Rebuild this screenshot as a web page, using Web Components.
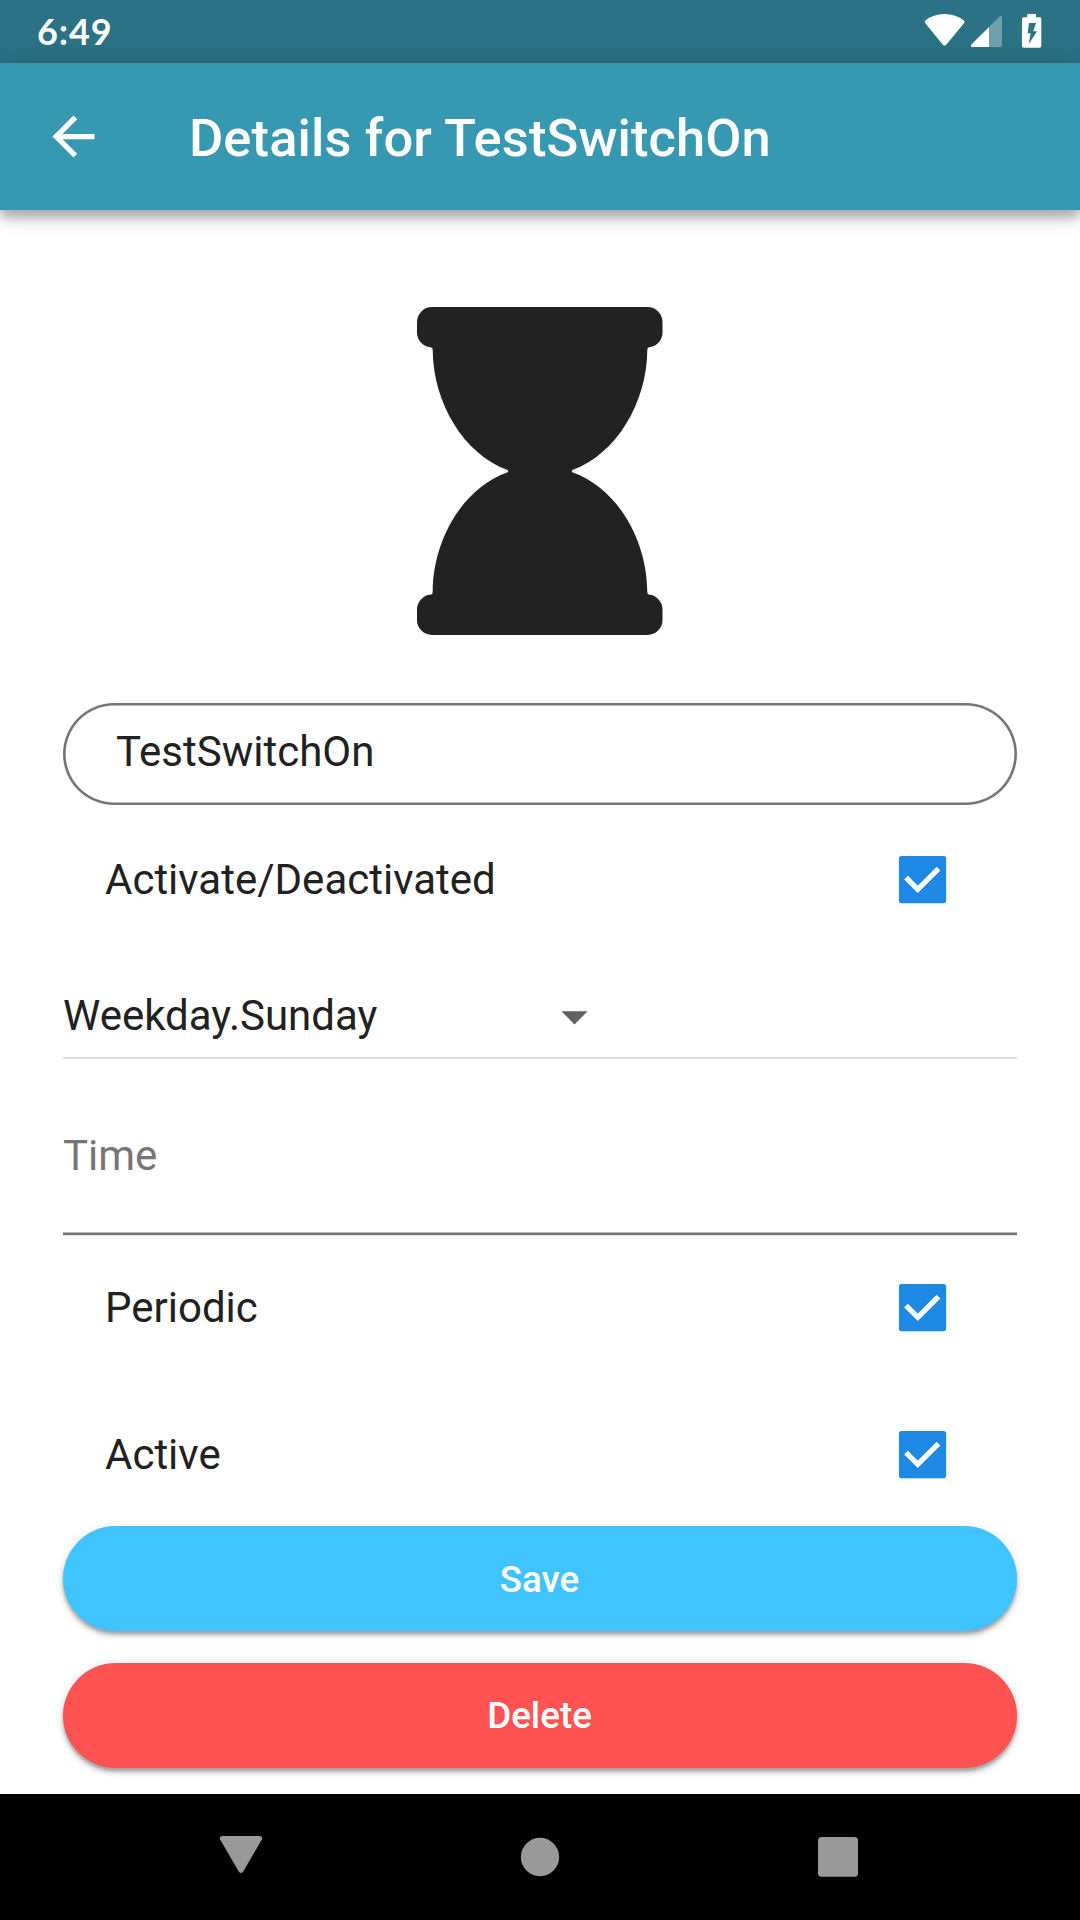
<!DOCTYPE html>
<html lang="en">
<head>
<meta charset="utf-8">
<title>Details for TestSwitchOn</title>
<style>
html,body{margin:0;padding:0;background:#fff}
body{width:1080px;height:1920px;overflow:hidden;font-family:Roboto,"Liberation Sans",sans-serif;color:#212121}
</style>
</head>
<body>
<details-screen></details-screen>
<script>
const define = (name, markup) => customElements.define(name, class extends HTMLElement {
  constructor() {
    super();
    const t = document.createElement('template');
    t.innerHTML = markup;
    this.attachShadow({ mode: 'open' }).appendChild(t.content.cloneNode(true));
  }
});

define('status-bar', `
<style>
:host{display:flex;height:63px;box-sizing:border-box;background:#2a7284;color:#fff;justify-content:space-between;padding:0 36px 0 37px}
.time{font:700 36px/62px Lato,sans-serif;letter-spacing:.9px}
svg{display:block}
</style>
<span class="time"><slot></slot></span>
<svg width="125" height="63" viewBox="919 0 125 63" fill="#fff">
<path d="M925.2 23Q923.8 21.6 925.4 20.5Q933 14 944.6 14Q956 14 963.8 20.5Q965.4 21.6 964.2 23L946 45Q944.5 46.6 943 45Z"/>
<path fill-opacity=".32" d="M989 27L999.6 16.4Q1002 14.8 1002 17.4V45Q1002 47 1000 47H989Z"/>
<path d="M989 27V47H972.2Q970 46.6 971.4 44.6Z"/>
<path fill-rule="evenodd" d="M1027.3 14H1036V17.3H1039.6Q1041.3 17.3 1041.3 19V46Q1041.3 47.8 1039.6 47.8H1023.8Q1022 47.8 1022 46V19Q1022 17.3 1023.8 17.3H1027.3ZM1029 23L1027.6 33.3H1030.6L1028.8 44L1037 31.3H1033.2L1036 23Z"/>
</svg>`);

define('app-bar', `
<style>
:host{display:flex;height:147px;align-items:center;background:#3699b1;color:#fff;box-shadow:0 5px 10px rgba(0,0,0,.2),0 10px 13px rgba(0,0,0,.14),0 2px 26px rgba(0,0,0,.12);box-sizing:border-box;padding-left:42px;gap:84px;z-index:1}
h1{margin:2px 0 0;font-size:52.5px;font-weight:500;line-height:62px;letter-spacing:.1px;white-space:nowrap}
svg{display:block}
</style>
<svg width="63" height="63" viewBox="0 0 24 24" fill="#fff"><path d="M20 11H7.83l5.59-5.59L12 4l-8 8 8 8 1.41-1.41L7.83 13H20v-2z"/></svg>
<h1><slot></slot></h1>`);

define('hourglass-icon', `
<style>:host{display:flex;justify-content:center}svg{display:block}</style>
<svg width="246" height="328" viewBox="417 307 246 328" fill="#222">
<rect x="417" y="307" width="245.5" height="40.5" rx="15"/>
<rect x="417" y="594.5" width="245.5" height="40.5" rx="15"/>
<path d="M431 347Q432.7 347.4 432.7 350C433 403 464 454 507 469.8Q509.6 471.2 507 472.6C464 488 433 538 432.7 592Q432.7 594.7 431 595H649Q647.3 594.7 647.3 592C647 538 616 488 573 472.6Q570.4 471.2 573 469.8C616 454 647 403 647.3 350Q647.3 347.4 649 347Z"/>
</svg>`);

define('name-field', `
<style>
:host{display:block;height:102.4px;box-sizing:border-box;box-shadow:inset 0 0 0 2.6px #757575;border-radius:51.2px;padding:2px 53px;font-size:42px;line-height:93px}
</style><slot></slot>`);

define('check-row', `
<style>
:host{display:flex;height:147px;align-items:center;justify-content:space-between;padding:0 63px 0 42px;font-size:42px;line-height:49px}
svg{display:block}
</style>
<span><slot></slot></span>
<svg width="63" height="63" viewBox="0 0 63 63"><rect x="7.9" y="7.9" width="47.25" height="47.25" rx="2.6" fill="#1e88e5"/><path d="M15 29.6L26.8 41.3L47.5 20.6" fill="none" stroke="#fff" stroke-width="5.25"/></svg>`);

define('day-select', `
<style>
:host{display:flex;height:88px;box-sizing:border-box;border-bottom:2px solid #ddd;font-size:42px;line-height:49px;padding-top:20px}
span{width:480.3px}
svg{display:block;margin-top:-6px}
</style>
<span><slot></slot></span><svg width="63" height="63" viewBox="0 0 24 24" fill="#616161"><path d="M7 10l5 5 5-5z"/></svg>`);

define('time-field', `
<style>
:host{display:block;height:117px;box-sizing:border-box;background:linear-gradient(#bbb 0 1px,#757575 1px 3px,#e8e8e8 3px 4px) bottom/100% 4px no-repeat;font-size:42px;line-height:49px;color:#757575;padding-top:12px}
</style><slot></slot>`);

define('pill-button', `
<style>
:host{display:flex;height:105px;box-sizing:border-box;align-items:center;justify-content:center;border-radius:52.5px;background:var(--fill);color:#fff;font-size:36.75px;font-weight:500;line-height:43px;box-shadow:0 3px 3px rgba(0,0,0,.2),0 5px 5px rgba(0,0,0,.14),0 2px 11px rgba(0,0,0,.12)}
span{margin-right:1px}
</style><span><slot></slot></span>`);

define('nav-bar', `
<style>
:host{display:flex;height:126px;background:#000}
svg{display:block}
</style>
<svg width="1080" height="126" viewBox="0 1794 1080 126" fill="#999">
<path d="M221.8 1836H260.2Q262.8 1836.5 262 1839.2L243 1872Q241 1874 239 1872L220 1839.2Q219.2 1836.5 221.8 1836Z"/>
<circle cx="540" cy="1857" r="19.2"/>
<rect x="818" y="1837" width="40" height="39.7" rx="3.5"/>
</svg>`);

define('details-screen', `
<style>
:host{display:flex;flex-direction:column;width:1080px;height:1920px}
main{flex:1;min-height:0;display:flex;flex-direction:column;padding:97px 63px 0}
main>*{flex-shrink:0}
name-field{margin-top:68px}
name-field+check-row{margin-top:.6px}
day-select{margin-top:18px}
time-field{margin-top:60px}
time-field+check-row{margin-top:-2px}
check-row+pill-button{margin-top:-1.6px;padding-top:1.6px}
pill-button+pill-button{margin-top:31.2px}
</style>
<status-bar>6:49</status-bar>
<app-bar>Details for TestSwitchOn</app-bar>
<main>
<hourglass-icon></hourglass-icon>
<name-field>TestSwitchOn</name-field>
<check-row>Activate/Deactivated</check-row>
<day-select>Weekday.Sunday</day-select>
<time-field>Time</time-field>
<check-row>Periodic</check-row>
<check-row>Active</check-row>
<pill-button style="--fill:#40c4ff">Save</pill-button>
<pill-button style="--fill:#ff5252">Delete</pill-button>
</main>
<nav-bar></nav-bar>`);
</script>
</body>
</html>
